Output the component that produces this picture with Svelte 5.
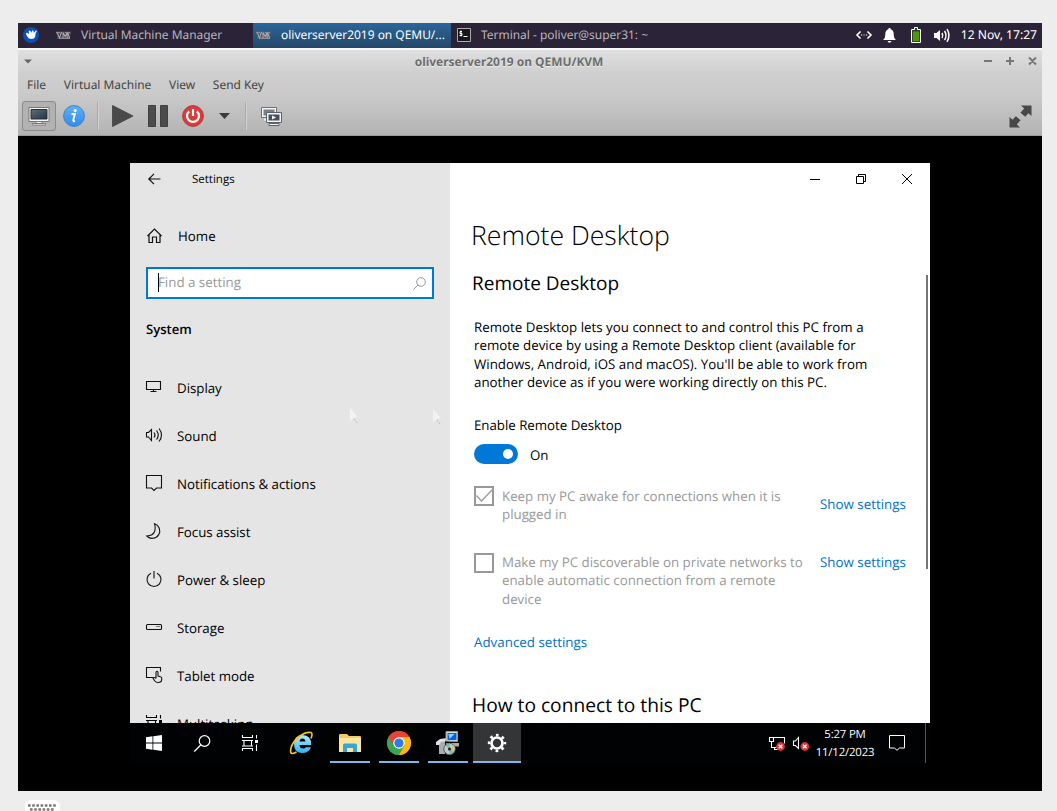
<script>
  const items = [
    { id: 'display', label: 'Display' },
    { id: 'sound', label: 'Sound' },
    { id: 'notes', label: 'Notifications & actions' },
    { id: 'focus', label: 'Focus assist' },
    { id: 'power', label: 'Power & sleep' },
    { id: 'storage', label: 'Storage' },
    { id: 'tablet', label: 'Tablet mode' },
    { id: 'multi', label: 'Multitasking' }
  ];
</script>

{#snippet vmlogo()}
  <svg class="vm" width="15" height="9" viewBox="0 0 15 9">
    <path d="M0 2h15M1 6.500h13" stroke="#6c6870" stroke-width="3" opacity=".55" />
    <path d="M1 1l2.500 6L5.500 1M7 7.500V1.500l2.200 4 2-4v6M11.500 1l2 6" fill="none" stroke="#aaa6a9" stroke-width="1.100" />
    <path d="M0 1.500h4M9 1.500h5M4 7.500h10" stroke="#8f8b90" />
  </svg>
{/snippet}

{#snippet taskview()}
  <svg width="17" height="16" viewBox="0 0 17 16" fill="none" stroke="currentColor" stroke-width="1.1">
    <path d="M.5 0v2.500h10V0M.5 16v-2.500h10V16M2 5.500h7.500v5.500H2zM0 5.500h11M0 11h11M14.500 0v3.500M14.500 9.500V16" />
    <path d="M13 5h3v3h-3z" fill="currentColor" stroke="none" />
  </svg>
{/snippet}

{#snippet navicon(id)}
  {#if id === 'multi'}
    {@render taskview()}
  {:else}
    <svg width="17" height="17" viewBox="0 0 17 17" fill="none" stroke="#111" stroke-width="1.1">
      {#if id === 'display'}
        <path d="M.5 2.500h14v8H.5zM7.500 10.500v2.500M4.500 12.500h6" />
      {:else if id === 'sound'}
        <path d="M.5 5.500h2L5.500 2.500v11L2.500 10H.5zM8 5.500q2 2.500 0 5M10.500 3.500q3.500 4.500 0 9M13 1.500q5 6.500 0 13" />
      {:else if id === 'notes'}
        <path d="M.5.500h15v12.500h-5l-2.500 2.500-2.500-2.500h-5z" />
      {:else if id === 'focus'}
        <path d="M8.500.700a7.500 7.500 0 1 1-7.700 12.300q7 0 8.200-5.800.6-3.200-.5-6.500z" />
      {:else if id === 'power'}
        <path d="M5 2.200a7 7 0 1 0 6 0M8 0v7.500" />
      {:else if id === 'storage'}
        <path d="M1.500 5.500h13q1 0 1 1v3q0 1-1 1h-13q-1 0-1-1v-3q0-1 1-1zM10.500 7.500h1M12.500 7.500h1" />
      {:else if id === 'tablet'}
        <path d="M7 10.500H.5V.500h14v4M10 11.500V5.500q0-1.300 1-1.300t1 1.300v3.500l2.500.7q1.200.3 1.200 1.300v1.200q0 3.300-3.700 3.300-2 0-3.200-1.500L7 11.200q.7-1.500 3 0" />
      {/if}
    </svg>
  {/if}
{/snippet}

<div class="page">
  <div class="desktop">
    <header class="panel">
      <div class="launcher">
        <svg width="16" height="16" viewBox="0 0 16 16">
          <circle cx="8" cy="8" r="8" fill="#0b50b4" />
          <path d="M3 7q0-1.300 1.200-1.200L6 7l-.3-3.500L7.500 4l1 1.800L9 3.500l1.500.2.3 2.300 2.200-2.700.8.700-1.400 3q.4 4.300-3.200 5Q5.500 12.200 4.300 9.500z" fill="#fff" />
        </svg>
      </div>
      <div class="task t1">{@render vmlogo()}<span>Virtual Machine Manager</span></div>
      <div class="task t2">{@render vmlogo()}<span>oliverserver2019 on QEMU/...</span></div>
      <div class="task t3">
        <svg width="14" height="14" viewBox="0 0 14 14">
          <path d="M.5.5h13v13H.5z" fill="#17171a" stroke="#aaa" />
          <path d="M5 3.500H3v2h2v2H2.500M4 2.500v6M6.500 8.500h4" stroke="#fff" fill="none" />
        </svg>
        <span>Terminal - poliver@super31: ~</span>
      </div>
      <div class="tray">
        <svg width="16" height="10" viewBox="0 0 16 10" stroke="#fff" fill="none" stroke-width="1.600">
          <path d="M4.500 1.500L1 5l3.500 3.500M11.500 1.500L15 5l-3.500 3.500" />
          <path d="M5 5h1.200M7.500 5h1.200M10 5h1.200" stroke-width="1" />
        </svg>
        <svg class="bell" width="13" height="15" viewBox="0 0 13 15" fill="#fff">
          <path d="M6.500 0q1.200 0 1.200 1.300 3 .9 3 4.700 0 4.500 2.300 6H0q2.300-1.500 2.300-6 0-3.800 3-4.700Q5.300 0 6.500 0zM4.500 13h4q-.5 1.700-2 1.700t-2-1.700z" />
        </svg>
        <svg class="batt" width="10" height="16" viewBox="0 0 10 16">
          <path d="M3.500 2.500V.5h3v2h3v13h-9v-13z" fill="#31462a" stroke="#fff" />
          <path d="M2 4.500h6V14H2z" fill="#4e9a06" />
        </svg>
        <svg class="vol" width="16" height="15" viewBox="0 0 16 15" fill="none" stroke="#fff" stroke-width="1.500">
          <path d="M0 5h2.500L6 2v11l-3.500-3H0z" fill="#fff" stroke="none" />
          <path d="M8 5q1.500 2.500 0 5M10.500 3q3 4.500 0 9M13 1.200q4 6.300 0 12.600" />
        </svg>
        <span>12 Nov, 17:27</span>
      </div>
    </header>

    <section class="vmwin">
      <div class="titlebar">
        <svg class="menuarrow" width="8" height="5" viewBox="0 0 8 5"><path d="M0 .5h8L4 4.500z" fill="#666" /></svg>
        <strong>oliverserver2019 on QEMU/KVM</strong>
        <svg class="winbtns" width="54" height="10" viewBox="0 0 54 10" fill="none" stroke="#777" stroke-width="2">
          <path d="M0 5h8M22 5h8M26 1v8M45 1.500l7 7M52 1.500l-7 7" />
        </svg>
      </div>
      <nav class="menubar"><span>File</span><span>Virtual Machine</span><span>View</span><span>Send Key</span></nav>
      <div class="toolbar">
        <div class="toggled">
          <svg width="22" height="20" viewBox="0 0 22 20">
            <defs><linearGradient id="scr" x2="1" y2="1"><stop stop-color="#5d6c7c" /><stop offset="1" stop-color="#263442" /></linearGradient></defs>
            <path d="M1 1.500h20v14H1z" fill="#f4f4f2" stroke="#777" />
            <path d="M3 3.500h16v9.500H3z" fill="url(#scr)" stroke="#283038" />
            <path d="M8 15.500h6v2H8zM4.500 17.500h13v1.500h-13z" fill="#eee" stroke="#666" stroke-width=".7" />
          </svg>
        </div>
        <svg class="info" width="22" height="22" viewBox="0 0 22 22">
          <defs><linearGradient id="inf" x2="0" y2="1"><stop stop-color="#62b0f8" /><stop offset="1" stop-color="#2f8cec" /></linearGradient></defs>
          <circle cx="11" cy="11" r="10.400" fill="url(#inf)" stroke="#3f82c4" />
          <path d="M8.500 9h3.300l-1.500 6q-.4 1.700 1.700 1" fill="none" stroke="#fff" stroke-width="1.900" />
          <circle cx="12.200" cy="5.500" r="1.500" fill="#fff" />
        </svg>
        <i class="sep s1"></i>
        <svg class="play" width="22" height="22" viewBox="0 0 22 22"><path d="M.5.500L21 11 .5 21.500z" fill="#4a4a4a" stroke="#404040" stroke-width=".8" /></svg>
        <svg class="pause" width="20" height="22" viewBox="0 0 20 22"><path d="M.5.500h7v21h-7zM12.500.500h7v21h-7z" fill="#4b4b4b" stroke="#404040" /></svg>
        <svg class="off" width="22" height="22" viewBox="0 0 22 22">
          <circle cx="11" cy="11" r="10.400" fill="#d93c3c" stroke="#b93535" />
          <path d="M7.200 6.300a6 6 0 1 0 7.600 0M11 4v7" fill="none" stroke="#fff" stroke-width="2.200" />
        </svg>
        <svg class="drop" width="11" height="6" viewBox="0 0 11 6"><path d="M0 0h11L5.500 6z" fill="#3c3c3c" /></svg>
        <i class="sep s2"></i>
        <svg class="snap" width="21" height="20" viewBox="0 0 21 20">
          <path d="M.5 1.500h15v10H.5z" fill="#f5f5f5" stroke="#687078" /><path d="M2.500 3.500h11v6h-11z" fill="#75808a" />
          <path d="M3 13.500h5" stroke="#eee" stroke-width="2" />
          <path d="M5.500 6.500h15v10h-15zM8 17.500h10v2H8z" fill="#f5f5f5" stroke="#5b646c" /><path d="M7.500 8.500h11v6h-11z" fill="#45515c" />
          <path d="M11 9.500l4 2-4 2z" fill="#fff" />
        </svg>
        <svg class="full" width="23" height="23" viewBox="0 0 23 23" fill="#484848">
          <path d="M12 .5h10.500V11l-3-2.700-3.300 3.500-4.700-4 3.700-4.300zM.5 22.500V12l3 2.700 3.300-3.500 4.700 4L7.800 19.500l3.200 3z" />
        </svg>
      </div>
    </section>

    <div class="viewport">
      <div class="guest">
        <div class="settings">
          <aside>
            <div class="apptitle">
              <svg width="13" height="12" viewBox="0 0 13 12" fill="none" stroke="#111" stroke-width="1.200"><path d="M12.500 6H1M6 .8L.8 6 6 11.200" /></svg>
              <span>Settings</span>
            </div>
            <div class="home">
              <svg width="16" height="16" viewBox="0 0 16 16" fill="none" stroke="#111" stroke-width="1.200"><path d="M.5 8L7.500 1l7 7M2 6.500v8h3.500V9h4v5.500H13v-8" /></svg>
              <span>Home</span>
            </div>
            <div class="search">
              <i class="caret"></i><span>Find a setting</span>
              <svg width="13" height="13" viewBox="0 0 13 13" fill="none" stroke="#999"><circle cx="8" cy="5" r="4.300" /><path d="M5 8L.5 12.500" /></svg>
            </div>
            <h3>System</h3>
            <ul>
              {#each items as item}
                <li><span class="ico">{@render navicon(item.id)}</span><span>{item.label}</span></li>
              {/each}
            </ul>
            <svg class="ghost g1" width="10" height="16" viewBox="0 0 10 16"><path d="M1 0l8 9-4 .5-4 4z" fill="#f2f2f2" /><path d="M5 11l3 4" stroke="#aaa" stroke-dasharray="1 1" /></svg>
            <svg class="ghost g2" width="10" height="16" viewBox="0 0 10 16"><path d="M1 0l8 9-4 .5-4 4z" fill="#f2f2f2" /><path d="M5 11l3 4" stroke="#aaa" stroke-dasharray="1 1" /></svg>
          </aside>
          <main>
            <div class="caption">
              <svg width="11" height="11" viewBox="0 0 11 11"><path d="M0 5.500h10" /></svg>
              <svg width="11" height="11" viewBox="0 0 11 11"><path d="M.5 2.500h7v7h-7zM2.500 2.500v-2h7v7h-2" /></svg>
              <svg width="11" height="11" viewBox="0 0 11 11"><path d="M0 0l10 10M10 0L0 10" /></svg>
            </div>
            <h1>Remote Desktop</h1>
            <div class="scroll">
              <div class="content">
                <h2>Remote Desktop</h2>
                <p class="intro">Remote Desktop lets you connect to and control this PC from a<br />remote device by using a Remote Desktop client (available for<br />Windows, Android, iOS and macOS). You'll be able to work from<br />another device as if you were working directly on this PC.</p>
                <div class="label">Enable Remote Desktop</div>
                <div class="switchrow"><div class="switch"><i></i></div><span>On</span></div>
                <div class="option o1">
                  <div class="box"><svg width="20" height="20" viewBox="0 0 20 20"><path d="M2.500 9.500l5 5.500L18 4" fill="none" stroke="#999" stroke-width="1.300" /></svg></div>
                  <p>Keep my PC awake for connections when it is<br />plugged in</p>
                  <a href="#awake">Show settings</a>
                </div>
                <div class="option o2">
                  <div class="box"></div>
                  <p>Make my PC discoverable on private networks to<br />enable automatic connection from a remote<br />device</p>
                  <a href="#discover">Show settings</a>
                </div>
                <a class="adv" href="#advanced">Advanced settings</a>
                <h2 class="how">How to connect to this PC</h2>
              </div>
              <div class="thumb"></div>
            </div>
          </main>
        </div>

        <footer class="taskbar">
          <div class="slot">
            <svg width="16" height="16" viewBox="0 0 16 16" fill="#fff"><path d="M0 2.300l6.500-1v6.200H0zM7.300 1.200L16 0v7.500H7.300zM0 8.400h6.500v6.300l-6.500-1zM7.300 8.400H16V16l-8.700-1.200z" /></svg>
          </div>
          <div class="slot">
            <svg width="17" height="17" viewBox="0 0 17 17" fill="none" stroke="#fff" stroke-width="1.200"><circle cx="10.500" cy="6" r="5.300" /><path d="M6.700 10L.3 16.500" /></svg>
          </div>
          <div class="slot tv">{@render taskview()}</div>
          <div class="app">
            <svg width="24" height="24" viewBox="0 0 24 24" fill="none">
              <defs><linearGradient id="ie" x2="0" y2="1"><stop stop-color="#b4ecff" /><stop offset="1" stop-color="#2fb1ef" /></linearGradient></defs>
              <path d="M22 16.200q-2.200 5.800-8.700 5.800-8.300 0-8.300-9 0-8.700 8.300-9 9.200.2 8.900 10H10.500q.3 3.500 3.500 3.500 2 0 2.800-1.300zM10.500 10.500h6q-.5-3-3-3T10.500 10.500z" fill="url(#ie)" />
              <path d="M22 7.500q2-5 0-6Q17 .5 10 5.500 2.500 12 1.700 18.500.8 25 7.500 21" stroke="#f0c22e" stroke-width="1.700" />
            </svg>
          </div>
          <div class="app open">
            <svg width="22" height="20" viewBox="0 0 22 20"><path d="M0 2q0-1 1-1h7l2 2h11q1 0 1 1v15H0z" fill="#efcb6c" /><path d="M0 5h22v14H0z" fill="#ffe6a0" /><path d="M4 19v-7q0-1.500 1.500-1.500h11q1.500 0 1.500 1.500v7h-4v-4H8v4z" fill="#33a6dc" /></svg>
          </div>
          <div class="app open">
            <svg width="24" height="24" viewBox="0 0 24 24">
              <circle cx="12" cy="12" r="12" fill="#ea4335" />
              <path d="M1.600 6L6.800 15 12 17.200 17.200 15 12 24A12 12 0 0 1 1.600 6z" fill="#34a853" />
              <path d="M12 24l5.200-9-.0-6-5.200-3h10.400A12 12 0 0 1 12 24z" fill="#fbbc05" />
              <path d="M1.600 6A12 12 0 0 1 22.400 6H12L6.500 14.500z" fill="#ea4335" />
              <circle cx="12" cy="12" r="5.800" fill="#fff" /><circle cx="12" cy="12" r="4.600" fill="#3479e8" />
            </svg>
          </div>
          <div class="app open">
            <svg width="24" height="26" viewBox="0 0 24 26">
              <path d="M3 11h6v13H6V13H3zM3 13h3v11H3z" fill="#a9adaf" /><path d="M0 12l4-3 7-1v3l-6 1-2 3H0z" fill="#dfe2e2" />
              <path d="M10 1.500h11.500v10L10 11z" fill="#d8dde0" stroke="#8f989c" /><path d="M11.500 3h9v7h-9z" fill="#0961d8" /><path d="M12.500 4h6l-5 5z" fill="#7fd5ff" />
              <path d="M10 13h13v3.500H10z" fill="#a8adae" /><circle cx="13.500" cy="19" r="5.700" fill="#c2cbcb" stroke="#596060" />
              <path d="M13.500 19L9.500 15.500q2-2.500 4.500-2zM13.500 19l4.500 3q-2 2.500-4.500 2z" fill="#6dbfa8" /><path d="M13.500 19l4-4q2 2.500 1 5z" fill="#d8c670" /><circle cx="13.500" cy="19" r="1.600" fill="#24282a" />
            </svg>
          </div>
          <div class="app open active">
            <svg width="20" height="20" viewBox="0 0 20 20" fill="none" stroke="#fff"><circle cx="10" cy="10" r="5.500" stroke-width="2.700" /><circle cx="10" cy="10" r="7.900" stroke-width="2.600" stroke-dasharray="2.700 3.505" stroke-dashoffset="1.350" /></svg>
          </div>
          <div class="wtray">
            <svg width="17" height="15" viewBox="0 0 17 15" fill="none" stroke="#fff" stroke-width="1.100">
              <path d="M.5 1.500h4v4h-4zM2.500 5.500v6h5M5 1.500h10.500v6M5 13.500h4M5.500 11.500v2" /><circle cx="11.500" cy="10.500" r="4.400" fill="#d4343b" stroke="none" /><path d="M9.700 8.700l3.600 3.600M13.300 8.700l-3.600 3.600" stroke-width="1.400" />
            </svg>
            <svg class="mute" width="17" height="15" viewBox="0 0 17 15" fill="none" stroke="#fff" stroke-width="1.100">
              <path d="M.5 5h2L5.500 1.500v11L2.500 9.500H.5z" /><circle cx="11.800" cy="10.500" r="4.400" fill="#d4343b" stroke="none" /><path d="M10 8.700l3.600 3.600M13.600 8.700L10 12.300" stroke-width="1.400" />
            </svg>
            <div class="clock"><span>5:27 PM</span><span>11/12/2023</span></div>
            <svg class="action" width="16" height="16" viewBox="0 0 16 16" fill="none" stroke="#fff"><path d="M.5.500h15v12.500h-5L8 15.300 5.500 13h-5z" /></svg>
            <i class="peek"></i>
          </div>
        </footer>
      </div>
    </div>
  </div>

  <div class="keyboard">
    <svg width="28" height="8" viewBox="0 0 28 8" stroke="#777" stroke-width="2.600" fill="none">
      <path d="M0 1.500h28" stroke-dasharray="2.600 1.600" /><path d="M2 5.500h24" stroke-dasharray="2.600 1.600" />
    </svg>
  </div>
</div>

<style>
  :global(body) { margin: 0; background: #ededed; overflow: hidden; }
  .page { width: 1057px; height: 811px; box-sizing: border-box; padding: 23px 15px 0 18px; overflow: hidden; background: #ededed; font: 11.950px/20px "Noto Sans", sans-serif; text-rendering: geometricPrecision; }
  svg { display: block; flex: none; overflow: visible; }
  .desktop { height: 768px; background: #000; display: flex; flex-direction: column; white-space: nowrap; }
  h1, h2, h3, p, ul { margin: 0; padding: 0; font-weight: 400; }
  a { color: #0072c9; text-decoration: none; }

  .panel { height: 25px; background: #2b2438; display: flex; color: #b9b5bd; align-items: stretch; }
  .launcher { width: 33px; padding: 4px 0 0 5px; box-sizing: border-box; }
  .task { display: flex; align-items: center; box-sizing: border-box; padding-bottom: 1px; }
  .task .vm { margin-right: 10px; }
  .t1 { width: 202px; padding-left: 5px; }
  .t2 { width: 198px; padding-left: 3px; background: linear-gradient(#2b659b, #244767); color: #fff; }
  .t3 { padding-left: 6px; }
  .t3 span { margin-left: 10px; }
  .tray { margin-left: auto; display: flex; align-items: center; padding: 0 5px 1px 0; color: #fff; }
  .bell { margin-left: 11px; }
  .batt { margin-left: 15px; }
  .vol { margin-left: 13px; margin-right: 11px; }
  .tray span { font-size: 12.100px; }

  .vmwin { height: 88px; box-sizing: border-box; border-top: 2px solid #f8f8f8; border-bottom: 1px solid #999; background: linear-gradient(#dfdfdf, #cfcfcf 28%, #cacaca 52%, #b3b3b3); color: #444; }
  .titlebar { height: 22px; display: grid; grid-template-columns: 60px 1fr 58px; align-items: center; }
  .titlebar strong { text-align: center; color: #6b6e6b; font-size: 11.950px; text-shadow: 0 1px #eee; margin: 1px 44px 0 0; justify-self: center; }
  .menuarrow { margin-left: 6px; }
  .menubar { height: 25px; display: flex; gap: 17.700px; align-items: center; padding-left: 9px; }
  .toolbar { display: flex; align-items: center; height: 38px; padding: 0 10px 0 4px; }
  .toggled { width: 34px; height: 30px; box-sizing: border-box; border: 1px solid #8b8b8b; border-radius: 3px; background: #b2b2b2; display: grid; place-items: center; }
  .info { margin-left: 7px; }
  .sep { width: 1px; height: 28px; background: #aaa; border-right: 1px solid #d2d2d2; }
  .s1 { margin-left: 12px; }
  .play { margin-left: 13px; }
  .pause { margin-left: 14px; }
  .off { margin-left: 14px; }
  .drop { margin-left: 15px; }
  .s2 { margin-left: 15px; }
  .snap { margin-left: 14px; }
  .full { margin-left: auto; }

  .viewport { flex: 1; padding: 27px 112px 28px; }
  .guest { width: 800px; height: 600px; font-family: "Open Sans", sans-serif; font-size: 13.320px; color: #000; }
  .settings { height: 560px; display: flex; overflow: hidden; }
  aside { width: 320px; background: #e5e5e5; position: relative; }
  .apptitle { display: flex; align-items: center; height: 33px; padding-left: 18px; font-size: 11.5px; gap: 31px; }
  .apptitle svg { margin-bottom: 2px; }
  .apptitle span { padding-top: 1px; }
  .home { display: flex; align-items: center; height: 48px; margin-top: 16px; padding-left: 17px; gap: 15px; }
  .search { margin: 7px 16px 0; height: 32px; box-sizing: border-box; border: 2px solid #0078d7; background: #fff; display: flex; align-items: center; color: #999; padding: 0 6px 2px 10px; }
  .caret { width: 1px; height: 19px; background: #000; margin-right: -1px; }
  .search span { flex: 1; }
  .search svg { margin-top: 3px; }
  h3 { margin: 20px 0 0 16px; font-size: 13.1px; font-weight: 600; line-height: 20px; }
  ul { list-style: none; margin-top: 25px; }
  li { height: 48px; display: flex; align-items: center; padding-left: 16px; letter-spacing: -.03px; }
  .ico { width: 31px; padding-bottom: 2px; }
  .ghost { position: absolute; }
  .g1 { left: 219px; top: 245px; }
  .g2 { left: 302px; top: 246px; }

  main { width: 480px; background: #fff; }
  .caption { height: 33px; display: flex; justify-content: flex-end; }
  .caption svg { padding: 11px 17px 0 18px; fill: none; stroke: #000; }
  h1 { font-size: 26.600px; font-weight: 300; line-height: 36px; margin: 21px 0 0 21px; }
  .scroll { display: flex; justify-content: space-between; margin-top: 14px; padding-right: 2px; }
  .content { padding-left: 24px; width: 440px; }
  .thumb { width: 2px; height: 294px; background: #777; margin-top: 8px; }
  h2 { font-size: 19px; line-height: 32px; margin-left: -2px; }
  .intro { line-height: 18.400px; margin-top: 19px; letter-spacing: .01px; }
  .label { margin-top: 23px; line-height: 20px; letter-spacing: -.03px; }
  .switchrow { display: flex; align-items: center; gap: 12px; margin-top: 8px; }
  .switchrow span { padding-top: 2px; line-height: 20px; }
  .switch { width: 44px; height: 20px; border-radius: 10px; background: #0078d7; display: flex; align-items: center; justify-content: flex-end; }
  .switch i { width: 10px; height: 10px; margin-right: 5px; border-radius: 50%; background: #fff; }
  .option { display: grid; grid-template-columns: 28px 318px auto; color: #999; line-height: 18.400px; letter-spacing: -.01px; }
  .o1 { margin-top: 21px; height: 57px; }
  .o2 { margin-top: 10px; height: 66px; }
  .o2 p { margin-top: -1px; line-height: 18.700px; }
  .option p { padding-top: 1px; }
  .option a { padding-top: 9px; letter-spacing: .02px; }
  .o2 a { padding-top: 0; }
  .box { width: 20px; height: 20px; box-sizing: border-box; border: 2px solid #999; }
  .box svg { margin: -2px; }
  .adv { display: block; margin-top: 13px; line-height: 20px; letter-spacing: .03px; }
  .how { margin-top: 37px; font-size: 19.200px; }

  .taskbar { height: 40px; background: #010204; display: flex; color: #fff; }
  .slot { width: 48px; display: grid; place-items: center; }
  .app { width: 48px; margin-left: 1px; box-sizing: border-box; display: grid; place-items: center; position: relative; }
  .slot:nth-child(3) { margin-right: 2px; }
  .open::after { content: ""; position: absolute; left: 4px; right: 4px; bottom: 0; height: 2px; background: #76b9ed; }
  .active { background: #343536; }
  .active::after { left: 0; right: 0; }
  .wtray { margin-left: auto; display: flex; align-items: center; padding-right: 4px; }
  .mute { margin-left: 7px; }
  .clock { display: flex; flex-direction: column; align-items: center; width: 66px; margin: 3px 0 0 2px; font-size: 11.4px; line-height: 18px; letter-spacing: -.18px; padding-bottom: 1px; }
  .action { margin-left: 11px; }
  .peek { width: 1px; height: 40px; background: #555; margin-left: 20px; }

  .keyboard { width: 35px; height: 20px; margin: 9px 0 0 7px; background: #fff; border-radius: 6px; box-sizing: border-box; padding: 4px 3px; }
</style>
